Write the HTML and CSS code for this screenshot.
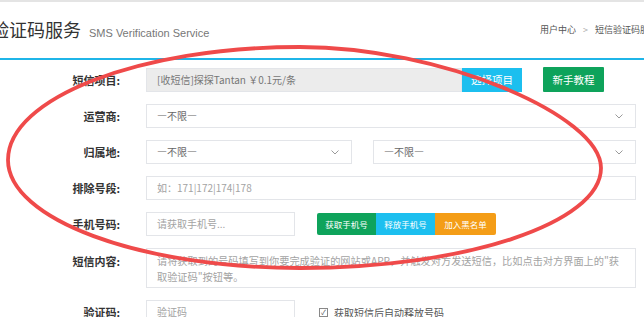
FILE: index.html
```html
<!DOCTYPE html>
<html lang="zh-CN">
<head>
    <meta charset="UTF-8">
    <title>验证码服务</title>
    <link rel="stylesheet" href="styles.css">
</head>
<body>
<div class="topbar"></div>

<div class="header">
    <h1 class="title">验证码服务</h1>
    <span class="subtitle">SMS Verification Service</span>
    <div class="crumbs">用户中心<span class="sep">&gt;</span>短信验证码服务</div>
</div>

<div class="form">
    <div class="row">
        <div class="label">短信项目:</div>
        <div class="input readonly w-project">[收短信]探探Tantan ￥0.1元/条</div>
        <button class="btn cyan btn-pick">选择项目</button>
        <button class="btn green btn-guide">新手教程</button>
    </div>

    <div class="row">
        <div class="label">运营商:</div>
        <div class="input select grow">
            <span>—不限—</span>
            <svg width="8" height="5" viewBox="0 0 8 5"><path d="M0.5 0.5 L4 4 L7.5 0.5" fill="none" stroke="#9a9a9a" stroke-width="1"/></svg>
        </div>
    </div>

    <div class="row">
        <div class="label">归属地:</div>
        <div class="input select w-area">
            <span>—不限—</span>
            <svg width="8" height="5" viewBox="0 0 8 5"><path d="M0.5 0.5 L4 4 L7.5 0.5" fill="none" stroke="#9a9a9a" stroke-width="1"/></svg>
        </div>
        <div class="input select grow gap-left">
            <span>—不限—</span>
            <svg width="8" height="5" viewBox="0 0 8 5"><path d="M0.5 0.5 L4 4 L7.5 0.5" fill="none" stroke="#9a9a9a" stroke-width="1"/></svg>
        </div>
    </div>

    <div class="row">
        <div class="label">排除号段:</div>
        <div class="input grow placeholder">如：171|172|174|178</div>
    </div>

    <div class="row">
        <div class="label">手机号码:</div>
        <div class="input w-phone placeholder">请获取手机号...</div>
        <div class="btn-group">
            <button class="btn small green">获取手机号</button>
            <button class="btn small cyan">释放手机号</button>
            <button class="btn small orange">加入黑名单</button>
        </div>
    </div>

    <div class="row">
        <div class="label top">短信内容:</div>
        <div class="textarea grow placeholder">请将获取到的号码填写到你要完成验证的网站或APP，并触发对方发送短信，比如点击对方界面上的"获<br>取验证码"按钮等。</div>
    </div>

    <div class="row">
        <div class="label">验证码:</div>
        <div class="input w-phone placeholder">验证码</div>
        <label class="check"><span class="box">✓</span>获取短信后自动释放号码</label>
    </div>
</div>

<!-- hand drawn red circle over the screenshot -->
<svg class="marker" width="644" height="317" viewBox="0 0 644 317">
    <path d="M300 47 C440 47 601 115 601 168 C601 223 466 268 300 268 C139 268 8 219 8 160 C8 98 139 47 300 47 Z"
          fill="none" stroke="#ef4a4a" stroke-width="3.8"/>
</svg>
</body>
</html>
```

FILE: styles.css
```css
body {
    margin: 0;
    width: 644px;
    height: 317px;
    overflow: hidden;
    position: relative;
    background-color: #fff;
    font-family: "Noto Sans CJK SC", "Liberation Sans", sans-serif;
    color: #333;
}

.topbar {
    height: 2px;
    background-color: #e4e4e4;
}

.header {
    height: 58px;
    box-sizing: border-box;
    padding-top: 18px;
    border-bottom: 2px solid #1fb5e8;
    display: flex;
    align-items: baseline;
}

.title {
    margin: 0 0 0 -9px;
    font-size: 18px;
    line-height: 18px;
    font-weight: normal;
    color: #333;
    white-space: nowrap;
}

.subtitle {
    margin-left: 8px;
    font-family: "Liberation Sans", sans-serif;
    font-size: 11px;
    color: #777;
}

.crumbs {
    align-self: flex-start;
    margin: 4px 0 0 auto;
    width: 104px;
    overflow: hidden;
    font-size: 9px;
    line-height: 12px;
    color: #555;
    white-space: nowrap;
}

.crumbs .sep {
    margin: 0 7px;
    color: #aaa;
}

.form {
    padding: 7px 8px 0 0;
    display: flex;
    flex-direction: column;
    gap: 12px;
}

.row {
    display: flex;
    align-items: center;
}

.label {
    flex: none;
    width: 120px;
    margin-right: 26px;
    text-align: right;
    font-size: 11px;
    font-weight: bold;
    color: #333;
}

.label.top {
    align-self: flex-start;
    padding-top: 5px;
}

.input {
    height: 24px;
    box-sizing: border-box;
    padding: 0 10px;
    border: 1px solid #e3e5e9;
    font-size: 10px;
    line-height: 22px;
    color: #666;
    white-space: nowrap;
}

.readonly {
    background-color: #ececec;
    color: #777;
}

.placeholder {
    color: #a3a3a3;
}

.grow {
    flex: 1;
}

.w-project {
    width: 316px;
}

.w-area {
    width: 206px;
}

.w-phone {
    width: 149px;
}

.gap-left {
    margin-left: 21px;
}

.select {
    display: flex;
    align-items: center;
    justify-content: space-between;
}

.select svg {
    margin-right: 2px;
}

.textarea {
    height: 40px;
    box-sizing: border-box;
    padding: 4px 10px;
    border: 1px solid #e3e5e9;
    font-size: 10.2px;
    line-height: 16px;
    white-space: nowrap;
}

.btn {
    height: 24px;
    padding: 0;
    border: none;
    color: #fff;
    font-family: "Noto Sans CJK SC", sans-serif;
    font-size: 10.5px;
}

.btn-pick {
    width: 60px;
}

.btn-guide {
    width: 61px;
    height: 25px;
    margin-left: 21px;
    border-radius: 1px;
}

.cyan {
    background-color: #1cbfef;
}

.green {
    background-color: #0ea35b;
}

.orange {
    background-color: #f49d17;
}

.btn-group {
    display: flex;
    margin-left: 22px;
    border-radius: 2px;
    overflow: hidden;
}

.btn.small {
    width: 59px;
    height: 22px;
    font-size: 8.5px;
}

.btn.small.orange {
    width: 61px;
}

.check {
    display: flex;
    align-items: center;
    margin-left: 24px;
    font-size: 10px;
    color: #555;
}

.check .box {
    width: 7px;
    height: 7px;
    margin-right: 6px;
    border: 1px solid #888;
    font-size: 7px;
    line-height: 7px;
    text-align: center;
    color: #555;
}

.marker {
    position: absolute;
    left: 0;
    top: 0;
    pointer-events: none;
}
```
